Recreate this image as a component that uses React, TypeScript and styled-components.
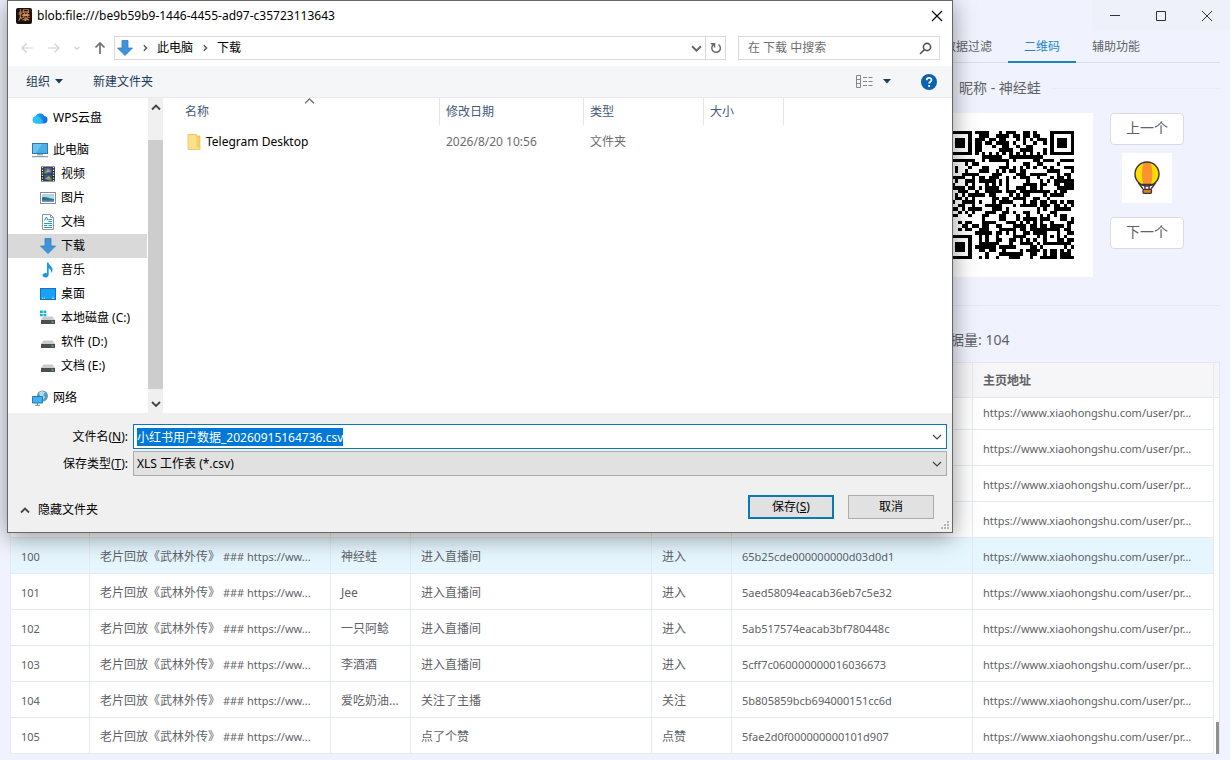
import React, { useEffect, useRef } from "react";
import styled, { createGlobalStyle, css } from "styled-components";

const GlobalStyle = createGlobalStyle`
  * { box-sizing: border-box; }
  body {
    margin: 0;
    background: #f0f3fe;
    font: 12px/16px "Noto Sans", "Noto Sans CJK SC", sans-serif;
    color: #606266;
  }
  button, input, select { font: inherit; color: inherit; margin: 0; }
  button { border: 0; padding: 0; background: none; cursor: pointer; }
  a { color: inherit; text-decoration: none; }
  svg { display: block; flex: none; }
`;

/* ---------- application window ---------- */

const Page = styled.div`
  position: relative;
  height: 100vh;
  min-height: 640px;
  display: flex;
  flex-direction: column;
  overflow: hidden;
  padding: 0 10px 6px;
`;

const TitleBar = styled.header`
  display: flex;
  justify-content: flex-end;
  height: 31px;
  margin-right: -10px;
`;

const WindowButton = styled.button`
  width: 46px;
  display: grid;
  place-items: center;
  background: #eff1fa;
  color: #333;
`;

const TopPanel = styled.section`
  display: grid;
  grid-template-columns: 1fr 292px;
  height: 275px;
  border-bottom: 1px solid #e6e9f2;
`;

const SidePanel = styled.div`
  grid-column: 2;
`;

const Tabs = styled.nav`
  display: flex;
  height: 32px;
  border-bottom: 1px solid #d8dde8;
`;

const Tab = styled.button<{ $active?: boolean }>`
  height: 32px;
  padding: 0 16px;
  ${(p) =>
    p.$active &&
    css`
      color: #1e88c8;
      border-bottom: 2px solid #1e86b8;
      padding-top: 2px;
    `}
`;

const Legend = styled.h2`
  display: flex;
  align-items: center;
  gap: 10px;
  margin: 15px 0 15px 31px;
  font-size: 14px;
  line-height: 20px;
  font-weight: 400;
  &::after {
    content: "";
    flex: 1;
    border-top: 1px solid #e9ecf6;
  }
`;

const QrRow = styled.div`
  display: flex;
  align-items: flex-start;
  gap: 17px;
  padding-left: 1px;
`;

const QrCard = styled.div`
  background: #fff;
  padding: 18px 19px;
`;

const Steps = styled.div`
  display: flex;
  flex-direction: column;
  align-items: center;
`;

const StepButton = styled.button`
  width: 74px;
  height: 32px;
  padding-bottom: 2px;
  border: 1px solid #d8dbe2;
  border-radius: 4px;
  background: #fff;
  font-size: 14px;
`;

const Balloon = styled.div`
  width: 50px;
  height: 50px;
  margin: 8px 0 14px;
  background: #fff;
  display: grid;
  place-items: center;
`;

const Count = styled.p`
  display: grid;
  grid-template-columns: 1fr 292px;
  margin: 24px 0 12px;
  font-size: 14px;
  line-height: 20px;
  span { grid-column: 2; padding-left: 8px; }
`;

const Grid = styled.section`
  flex: 1;
  min-height: 0;
  display: flex;
  flex-direction: column;
  border-top: 1px solid #e4e7ee;
  border-right: 1px solid #e4e7ee;
  background: #fff;
`;

const GridHead = styled.div`
  background: #f6f6f8;
  border-bottom: 1px solid #e4e7ee;
  padding-right: 5px;
`;

const GridBody = styled.div`
  position: relative;
  flex: 1;
  min-height: 0;
  display: flex;
  flex-direction: column;
  justify-content: flex-end;
  overflow: hidden;
  padding-right: 5px;
`;

const GridThumb = styled.span`
  position: absolute;
  right: 0;
  bottom: 0;
  width: 3px;
  height: 32px;
  background: #909090;
`;

const DataTable = styled.table`
  width: 100%;
  table-layout: fixed;
  border-collapse: separate;
  border-spacing: 0;
  th, td {
    height: 36px;
    padding: 2px 10px 0;
    text-align: left;
    white-space: nowrap;
    overflow: hidden;
    border-right: 1px solid #e6e9ee;
  }
  th { height: 34px; }
  td { border-bottom: 1px solid #e6e9ee; }
  th:first-child, td:first-child { border-left: 1px solid #e6e9ee; }
`;

const DataRow = styled.tr<{ $selected?: boolean }>`
  background: ${(p) => (p.$selected ? "#e6f6ff" : "#fff")};
`;

const Latin = styled.span`
  font-size: 11px;
`;

/* ---------- save dialog ---------- */

const Dialog = styled.div`
  position: absolute;
  left: 7px;
  top: 0;
  width: 946px;
  max-width: calc(100% - 14px);
  border: 1px solid #666;
  background: #fff;
  color: #000;
  box-shadow: 0 4px 22px rgba(0, 0, 0, 0.42);
`;

const DialogTitle = styled.div`
  display: flex;
  align-items: center;
  gap: 5px;
  height: 30px;
  padding: 0 9px 0 8px;
`;

const AppBadge = styled.span`
  width: 16px;
  height: 16px;
  border-radius: 2px;
  background: #1c100c;
  color: #e0a060;
  font-size: 12px;
  line-height: 16px;
  text-align: center;
`;

const TitleText = styled.h1`
  flex: 1;
  margin: 0;
  font-size: 12px;
  font-weight: 400;
`;

const NavRow = styled.div`
  display: flex;
  align-items: center;
  height: 35px;
  padding: 0 12px 1px 12px;
`;

const NavButtons = styled.div`
  display: flex;
  align-items: center;
  gap: 13px;
  width: 94px;
`;

const Address = styled.div`
  flex: 1;
  display: flex;
  align-items: center;
  height: 24px;
  margin-right: 12px;
  padding-left: 2px;
  border: 1px solid #d9d9d9;
  button { flex: none; }
`;

const Crumbs = styled.div`
  flex: 1;
  display: flex;
  align-items: center;
  gap: 8px;
`;

const RefreshButton = styled.button`
  width: 20px;
  height: 22px;
  margin-left: 3px;
  border-left: 1px solid #d9d9d9;
  display: grid;
  place-items: center;
`;

const Search = styled.label`
  display: flex;
  align-items: center;
  width: 202px;
  height: 24px;
  padding: 0 7px 0 9px;
  border: 1px solid #d9d9d9;
  input {
    flex: 1;
    min-width: 0;
    border: 0;
    outline: 0;
    padding: 0;
    background: none;
  }
  input::placeholder { color: #6d6d6d; opacity: 1; }
`;

const Toolbar = styled.div`
  display: flex;
  align-items: center;
  height: 32px;
  padding: 0 15px 0 18px;
  background: #f4f6f8;
  border-bottom: 1px solid #e8eaee;
  color: #1e3a5c;
`;

const ToolButton = styled.button`
  display: flex;
  align-items: center;
  gap: 5px;
  margin-right: 30px;
`;

const Spacer = styled.span`
  flex: 1;
`;

const Explorer = styled.div`
  display: flex;
  height: 315px;
`;

const Tree = styled.ul`
  width: 140px;
  margin: 0;
  padding: 8px 0 0;
  list-style: none;
`;

const TreeItem = styled.li<{ $level: number; $selected?: boolean; $gap?: boolean }>`
  display: flex;
  align-items: center;
  height: 24px;
  gap: 5px;
  padding-left: ${(p) => (p.$level ? 32 : 24)}px;
  margin-top: ${(p) => (p.$gap ? 8 : 0)}px;
  margin-right: 1px;
  background: ${(p) => (p.$selected ? "#d9d9d9" : "transparent")};
`;

const ScrollBar = styled.div`
  width: 15px;
  display: flex;
  flex-direction: column;
  background: #f0f0f0;
  button { display: grid; place-items: center; height: 18px; }
`;

const ScrollThumb = styled.span`
  flex: 1;
  margin: 24px 0 6px;
  background: #cdcdcd;
`;

const FileTable = styled.table`
  flex: 1;
  align-self: flex-start;
  table-layout: fixed;
  border-collapse: separate;
  border-spacing: 0;
  margin-left: 3px;
  width: 100%;
  color: #6d6d6d;
  th, td {
    padding: 0 6px;
    text-align: left;
    font-weight: 400;
    white-space: nowrap;
  }
  th {
    height: 27px;
    color: #44587a;
    border-right: 1px solid #e5e5e5;
  }
  th:last-child { border-right: 0; }
  th:first-child { padding-left: 19px; }
  td { height: 28px; padding-top: 5px; }
  td:first-child { padding-left: 21px; color: #000; }
`;

const NameHead = styled.div`
  position: relative;
  svg { position: absolute; top: -9px; left: 119px; }
`;

const FileName = styled.span`
  display: flex;
  align-items: center;
  gap: 5px;
`;

const Footer = styled.form`
  padding: 11px 5px 13px 6px;
  background: #f0f0f0;
`;

const Field = styled.div`
  display: grid;
  grid-template-columns: 114px 1fr;
  align-items: center;
  gap: 5px;
  margin-bottom: 2px;
  label { text-align: right; }
`;

const Combo = styled.div<{ $active?: boolean }>`
  display: flex;
  align-items: center;
  height: 25px;
  padding: 0 4px 0 3px;
  border: 1px solid ${(p) => (p.$active ? "#0a78b8" : "#acacac")};
  background: ${(p) => (p.$active ? "#fff" : "#e1e1e1")};
  input, select {
    flex: 1;
    min-width: 0;
    height: 18px;
    border: 0;
    outline: 0;
    padding: 0;
    background: none;
    appearance: none;
  }
  ::selection { background: #0078d7; color: #fff; }
  svg { pointer-events: none; }
`;

const Actions = styled.div`
  display: flex;
  align-items: center;
  gap: 14px;
  padding: 17px 13px 0 6px;
`;

const HideButton = styled.button`
  display: flex;
  align-items: center;
  gap: 8px;
  margin: 5px auto 0 0;
`;

const ActionButton = styled.button<{ $primary?: boolean }>`
  width: 86px;
  height: 24px;
  background: #e1e1e1;
  border: ${(p) => (p.$primary ? "2px solid #0a78b8" : "1px solid #acacac")};
`;

const Grip = styled.span`
  position: absolute;
  right: 2px;
  bottom: 2px;
`;

/* ---------- icons ---------- */

const Chevron = ({ dir = "down", size = 10, color = "#444", w = 1.4 }: { dir?: "up" | "down" | "right"; size?: number; color?: string; w?: number }) => {
  const d = { up: "M1 7.5 5 3.500 9 7.500", down: "M1 3 5 7 9 3", right: "M3.500 1.500 7 5 3.500 8.500" }[dir];
  return (
    <svg width={size} height={size} viewBox="0 0 10 10" fill="none" stroke={color} strokeWidth={w}>
      <path d={d} />
    </svg>
  );
};

const Arrow = ({ dir, color }: { dir: "left" | "right" | "up"; color: string }) => {
  const d = {
    left: "M13 7H2M6.500 2.500 2 7l4.500 4.500",
    right: "M1 7h11M7.500 2.500 12 7l-4.500 4.500",
    up: "M7 13V2M2.500 6.500 7 2l4.500 4.500",
  }[dir];
  return (
    <svg width="14" height="14" viewBox="0 0 14 14" fill="none" stroke={color} strokeWidth={dir === "up" ? 1.7 : 1.2}>
      <path d={d} />
    </svg>
  );
};

const Triangle = () => (
  <svg width="8" height="5" viewBox="0 0 8 5"><path d="M0 0h8L4 4.500z" fill="#1e3a5c" /></svg>
);

const DownloadIcon = () => (
  <svg width="16" height="16" viewBox="0 0 16 16">
    <path d="M5 .5h6v7.500h4.500L8 15.500.500 8H5z" fill="#3d93dc" stroke="#2f7fc4" strokeWidth=".8" />
  </svg>
);

const CloudIcon = () => (
  <svg width="16" height="16" viewBox="0 0 16 16">
    <defs>
      <linearGradient id="cloud" x1="0" x2="1"><stop offset="0" stopColor="#25c4f5" /><stop offset="1" stopColor="#1462e0" /></linearGradient>
    </defs>
    <path d="M4 13.500a3.700 3.700 0 0 1-.5-7.300A5 5 0 0 1 12.500 6 3.800 3.800 0 0 1 12 13.500z" fill="url(#cloud)" />
    <path d="M1.500 7.500c3-2.500 6-1 8 1.500 1.500 2 1.500 3.500 0 4.500H4A3.700 3.700 0 0 1 1.500 7.500z" fill="#2cc9f2" opacity=".75" />
  </svg>
);

const PcIcon = () => (
  <svg width="16" height="16" viewBox="0 0 16 16">
    <rect x=".5" y="1.500" width="15" height="10" fill="#47aee8" stroke="#2d78a8" />
    <path d="M1 2h9L4 11H1z" fill="#7dcaf4" opacity=".7" />
    <path d="M0 14.700h16M5 12.800h6" stroke="#6a8ea4" />
  </svg>
);

const VideoIcon = () => (
  <svg width="16" height="16" viewBox="0 0 16 16">
    <rect x="1" y=".5" width="14" height="15" fill="#2c2c30" />
    <path d="M2.500 1v14M13.500 1v14" stroke="#e6e6e6" strokeWidth="1.300" strokeDasharray="1.300 1.300" />
    <rect x="4.300" y="1.500" width="7.400" height="6" fill="#4668a8" />
    <rect x="4.300" y="8.500" width="7.400" height="6" fill="#37599b" />
    <path d="M5 6.500 8 3l3 2.500zM5 13l4-3 2 3.500z" fill="#d8a23c" />
    <path d="M4.300 5.500h3v2h-3zM8.500 12.500h3v2h-3z" fill="#56a04c" />
  </svg>
);

const ImageIcon = () => (
  <svg width="16" height="16" viewBox="0 0 16 16">
    <rect x=".5" y="2.500" width="15" height="11" fill="#fff" stroke="#8c8c8c" />
    <rect x="2" y="4" width="12" height="8" fill="#a9d6f0" />
    <path d="M2 7.500c3-1.500 6 1 12 1.500v3H2z" fill="#3a6b80" />
    <path d="M2 10.500h12V12H2z" fill="#5b9bc4" />
  </svg>
);

const DocIcon = () => (
  <svg width="16" height="16" viewBox="0 0 16 16">
    <path d="M2.500.5h8l3 3v12h-11z" fill="#fff" stroke="#8a9a9f" />
    <path d="M10.500.5v3h3" fill="none" stroke="#8a9a9f" />
    <path d="M4.500 6.500 6.500 3l1.500 3.500M8.500 5.500H12M8.500 7.500H12M4 9.500h8M4 11.500h3M8.500 11.500H12M4 13.500h8" fill="none" stroke="#2b9bb5" />
  </svg>
);

const MusicIcon = () => (
  <svg width="16" height="16" viewBox="0 0 16 16">
    <path d="M7 .5h1.500c.5 3 4.500 4 4 7.500-.2 1.500-1 2.500-1.500 3 .5-2.500-.5-4-2.300-4.800V12.500c0 1.800-1.500 3-3.200 3S2.500 14.500 2.500 13.300 4 11 5.500 11c.6 0 1 .1 1.500.3z" fill="#1b98e0" />
  </svg>
);

const DesktopIcon = () => (
  <svg width="16" height="16" viewBox="0 0 16 16">
    <rect x=".5" y="2.500" width="15" height="11" fill="#1aa2f4" stroke="#1473bd" />
    <path d="M2 12.200h1M4 12.200h1M12 12.200h2" stroke="#fff" strokeWidth=".8" />
  </svg>
);

const DiskIcon = ({ system }: { system?: boolean }) => (
  <svg width="16" height="16" viewBox="0 0 16 16">
    <path d="M3.500 6.500h9L15 10H1z" fill="#c9cccd" />
    <rect x="1" y="10" width="14" height="4" fill="#4a4f50" />
    <path d="M11.500 12h2" stroke="#7fe07f" />
    {system && <path d="M0 .5h2.800v2.500H0zM3.500.5h2.800v2.500H3.500zM0 3.700h2.800v2.500H0zM3.500 3.700h2.800v2.500H3.500z" fill="#1fb0d4" />}
  </svg>
);

const NetworkIcon = () => (
  <svg width="16" height="16" viewBox="0 0 16 16">
    <circle cx="10.500" cy="6" r="5.500" fill="#5a9cc0" />
    <path d="M7 3c2-2.500 4-2 6-.5L11 5l2 2-2 3-3-4z" fill="#b8dbe8" />
    <path d="M.5 6.500h10v6.500H.5z" fill="#3fb0f0" stroke="#2a76ae" />
    <path d="M5.500 13v2M3 15.300h5" stroke="#5c89a8" />
  </svg>
);

const FolderIcon = () => (
  <svg width="14" height="16" viewBox="0 0 14 16">
    <path d="M1 .5h8.500v1.500H13v13.500H1z" fill="#f6d067" />
    <path d="M1 .5h8.500v13H13v2H1z" fill="#fde08a" />
    <path d="M1 15.500V.5h8.500V2H13v13.500z" fill="none" stroke="#e5bd52" strokeWidth=".7" />
  </svg>
);

const BalloonIcon = () => (
  <svg width="26" height="34" viewBox="0 0 26 34">
    <circle cx="13" cy="13" r="12" fill="#ffdc00" />
    <path d="M9.500 1.500h7c2.500 7 2.500 16 0 23h-7c-2-7-2-16 0-23z" fill="#fb9230" />
    <path d="M4.500 22 9 28M21.500 22 17 28M11 25v3M15 25v3M6 23.500h14" fill="none" stroke="#3c3436" strokeWidth="1.400" />
    <circle cx="13" cy="13" r="12" fill="none" stroke="#3c3436" strokeWidth="1.400" />
    <rect x="9" y="28.300" width="8.500" height="4" rx="1" fill="#e07b28" stroke="#3c3436" strokeWidth="1.300" />
  </svg>
);

const SIZE = 37;

const ring = (dx: number, dy: number, radius: number) => {
  const d = Math.max(Math.abs(dx), Math.abs(dy));
  if (d > radius) return null;
  return radius === 4 ? d === 3 || d <= 1 : d !== 1;
};

const isDark = (x: number, y: number) => {
  const fixed =
    ring(x - 3, y - 3, 4) ?? ring(x - SIZE + 4, y - 3, 4) ?? ring(x - 3, y - SIZE + 4, 4) ?? ring(x - 30, y - 30, 2);
  if (fixed !== null) return fixed;
  if (x === 6 || y === 6) return (x + y) % 2 === 0;
  let h = Math.imul(x + 11, 374761393) ^ Math.imul(y + 5, 668265263);
  h = Math.imul(h ^ (h >>> 13), 1274126177);
  return ((h ^ (h >>> 16)) & 255) < 128;
};

const qrPath = Array.from({ length: SIZE * SIZE }, (_, i) => [i % SIZE, Math.floor(i / SIZE)])
  .filter(([x, y]) => isDark(x, y))
  .map(([x, y]) => `M${x} ${y}h1v1h-1z`)
  .join("");

const QrCode = () => (
  <svg width="126" height="128" viewBox="0 0 37 37" preserveAspectRatio="none" shapeRendering="crispEdges" role="img" aria-label="二维码">
    <path d={qrPath} />
  </svg>
);

/* ---------- data ---------- */

const headers = ["序号", "直播间", "昵称", "内容", "类型", "用户ID", "主页地址"];
const room = "老片回放《武林外传》";
const roomLink = " ### https://ww...";
const url = "https://www.xiaohongshu.com/user/pr...";

type Entry = { no: number; nick?: string; text?: string; kind?: string; id?: string };
const rows: Entry[] = [
  { no: 96 },
  { no: 97 },
  { no: 98 },
  { no: 99 },
  { no: 100, nick: "神经蛙", text: "进入直播间", kind: "进入", id: "65b25cde000000000d03d0d1" },
  { no: 101, nick: "Jee", text: "进入直播间", kind: "进入", id: "5aed58094eacab36eb7c5e32" },
  { no: 102, nick: "一只阿鲶", text: "进入直播间", kind: "进入", id: "5ab517574eacab3bf780448c" },
  { no: 103, nick: "李酒酒", text: "进入直播间", kind: "进入", id: "5cff7c060000000016036673" },
  { no: 104, nick: "爱吃奶油...", text: "关注了主播", kind: "关注", id: "5b805859bcb694000151cc6d" },
  { no: 105, text: "点了个赞", kind: "点赞", id: "5fae2d0f000000000101d907" },
];

const tree: { label: string; icon: React.ReactNode; level: number; gap?: boolean; selected?: boolean }[] = [
  { label: "WPS云盘", icon: <CloudIcon />, level: 0 },
  { label: "此电脑", icon: <PcIcon />, level: 0, gap: true },
  { label: "视频", icon: <VideoIcon />, level: 1 },
  { label: "图片", icon: <ImageIcon />, level: 1 },
  { label: "文档", icon: <DocIcon />, level: 1 },
  { label: "下载", icon: <DownloadIcon />, level: 1, selected: true },
  { label: "音乐", icon: <MusicIcon />, level: 1 },
  { label: "桌面", icon: <DesktopIcon />, level: 1 },
  { label: "本地磁盘 (C:)", icon: <DiskIcon system />, level: 1 },
  { label: "软件 (D:)", icon: <DiskIcon />, level: 1 },
  { label: "文档 (E:)", icon: <DiskIcon />, level: 1 },
  { label: "网络", icon: <NetworkIcon />, level: 0, gap: true },
];

const Columns = () => (
  <colgroup>
    <col style={{ width: 80 }} />
    <col />
    <col style={{ width: 80 }} />
    <col />
    <col style={{ width: 80 }} />
    <col />
    <col />
  </colgroup>
);

function SaveDialog() {
  const name = useRef<HTMLInputElement>(null);
  useEffect(() => {
    name.current?.focus();
    name.current?.select();
  }, []);

  return (
    <Dialog role="dialog" aria-labelledby="dialog-title">
      <DialogTitle>
        <AppBadge>爆</AppBadge>
        <TitleText id="dialog-title">blob:file:///be9b59b9-1446-4455-ad97-c35723113643</TitleText>
        <button aria-label="关闭">
          <svg width="12" height="12" viewBox="0 0 12 12" stroke="#000" strokeWidth="1.100"><path d="m1 1 10 10M11 1 1 11" /></svg>
        </button>
      </DialogTitle>

      <NavRow>
        <NavButtons>
          <button aria-label="后退"><Arrow dir="left" color="#d0d0d0" /></button>
          <button aria-label="前进"><Arrow dir="right" color="#d0d0d0" /></button>
          <button aria-label="历史"><Chevron size={6} color="#ccc" w={2} /></button>
          <button aria-label="向上"><Arrow dir="up" color="#707070" /></button>
        </NavButtons>
        <Address>
          <Crumbs>
            <DownloadIcon />
            <Chevron dir="right" size={8} color="#555" w={1.8} />
            <button>此电脑</button>
            <Chevron dir="right" size={8} color="#555" w={1.8} />
            <button>下载</button>
          </Crumbs>
          <button aria-label="展开"><Chevron size={11} color="#666" w={1.8} /></button>
          <RefreshButton aria-label="刷新">
            <svg width="12" height="12" viewBox="0 0 12 12" fill="none" stroke="#666" strokeWidth="1.500">
              <path d="M8.500 2.500A4.300 4.300 0 1 1 3.800 2.400M.8 1.800H4.500V5.500" />
            </svg>
          </RefreshButton>
        </Address>
        <Search>
          <input aria-label="搜索" placeholder="在 下载 中搜索" />
          <svg width="13" height="13" viewBox="0 0 13 13" fill="none" stroke="#555" strokeWidth="1.600">
            <circle cx="8" cy="5" r="3.600" /><path d="M5.500 7.500 1 12" />
          </svg>
        </Search>
      </NavRow>

      <Toolbar>
        <ToolButton>组织 <Triangle /></ToolButton>
        <ToolButton>新建文件夹</ToolButton>
        <Spacer />
        <ToolButton aria-label="视图">
          <svg width="17" height="13" viewBox="0 0 17 13" fill="none" stroke="#888">
            <path d="M.5.5h4v12h-4zM.5 4.500h4M.5 8.500h4" />
            <path d="M7 2.500h4M12.500 2.500h4M7 6.500h4M12.500 6.500h4M7 10.500h4M12.500 10.500h4" />
          </svg>
          <Spacer />
          <Triangle />
        </ToolButton>
        <button aria-label="帮助">
          <svg width="16" height="16" viewBox="0 0 16 16">
            <circle cx="8" cy="8" r="8" fill="#0a62b0" />
            <path d="M5.700 6.200C5.700 3.200 10.500 3.200 10.500 6c0 1.700-2.400 1.800-2.400 3.600" fill="none" stroke="#fff" strokeWidth="1.700" />
            <circle cx="8.100" cy="12" r="1.100" fill="#fff" />
          </svg>
        </button>
      </Toolbar>

      <Explorer>
        <Tree>
          {tree.map((t) => (
            <TreeItem key={t.label} $level={t.level} $gap={t.gap} $selected={t.selected}>
              {t.icon}
              <span>{t.label}</span>
            </TreeItem>
          ))}
        </Tree>
        <ScrollBar>
          <button aria-label="向上滚动"><Chevron dir="up" w={1.8} /></button>
          <ScrollThumb />
          <button aria-label="向下滚动"><Chevron w={1.8} /></button>
        </ScrollBar>
        <FileTable>
          <colgroup>
            <col style={{ width: 274 }} />
            <col style={{ width: 144 }} />
            <col style={{ width: 120 }} />
            <col style={{ width: 80 }} />
            <col />
          </colgroup>
          <thead>
            <tr>
              <th><NameHead>名称<Chevron dir="up" size={11} color="#666" w={1.1} /></NameHead></th>
              <th>修改日期</th>
              <th>类型</th>
              <th>大小</th>
              <th />
            </tr>
          </thead>
          <tbody>
            <tr>
              <td><FileName><FolderIcon />Telegram Desktop</FileName></td>
              <td>2026/8/20 10:56</td>
              <td>文件夹</td>
              <td />
              <td />
            </tr>
          </tbody>
        </FileTable>
      </Explorer>

      <Footer onSubmit={(e) => e.preventDefault()}>
        <Field>
          <label htmlFor="file-name">文件名(<u>N</u>):</label>
          <Combo $active>
            <input id="file-name" ref={name} defaultValue="小红书用户数据_20260915164736.csv" />
            <Chevron w={1.2} />
          </Combo>
        </Field>
        <Field>
          <label htmlFor="file-type">保存类型(<u>T</u>):</label>
          <Combo>
            <select id="file-type"><option>XLS 工作表 (*.csv)</option></select>
            <Chevron w={1.2} />
          </Combo>
        </Field>
        <Actions>
          <HideButton type="button"><Chevron dir="up" w={1.8} />隐藏文件夹</HideButton>
          <ActionButton $primary>保存(<u>S</u>)</ActionButton>
          <ActionButton type="button">取消</ActionButton>
        </Actions>
      </Footer>
      <Grip>
        <svg width="9" height="9" viewBox="0 0 9 9" fill="#b5b5b5">
          <path d="M6 0h2v2H6zM3 3h2v2H3zM6 3h2v2H6zM0 6h2v2H0zM3 6h2v2H3zM6 6h2v2H6z" />
        </svg>
      </Grip>
    </Dialog>
  );
}

export default function App() {
  return (
    <Page>
      <GlobalStyle />
      <TitleBar>
        <WindowButton aria-label="最小化"><svg width="10" height="10" stroke="#333"><path d="M0 4.500h10" /></svg></WindowButton>
        <WindowButton aria-label="最大化"><svg width="10" height="10" fill="none" stroke="#333"><path d="M.5.5h9v9h-9z" /></svg></WindowButton>
        <WindowButton aria-label="关闭窗口"><svg width="10" height="10" stroke="#333"><path d="m0 0 10 10M10 0 0 10" /></svg></WindowButton>
      </TitleBar>

      <TopPanel>
        <SidePanel>
          <Tabs>
            <Tab>数据过滤</Tab>
            <Tab $active>二维码</Tab>
            <Tab>辅助功能</Tab>
          </Tabs>
          <Legend>昵称 - 神经蛙</Legend>
          <QrRow>
            <QrCard><QrCode /></QrCard>
            <Steps>
              <StepButton>上一个</StepButton>
              <Balloon><BalloonIcon /></Balloon>
              <StepButton>下一个</StepButton>
            </Steps>
          </QrRow>
        </SidePanel>
      </TopPanel>

      <Count><span>数据量: 104</span></Count>

      <Grid>
        <GridHead>
          <DataTable>
            <Columns />
            <thead>
              <tr>{headers.map((h) => <th key={h}>{h}</th>)}</tr>
            </thead>
          </DataTable>
        </GridHead>
        <GridBody>
          <DataTable>
            <Columns />
            <tbody>
              {rows.map((r) => (
                <DataRow key={r.no} $selected={r.no === 100}>
                  <td>{r.id && <Latin>{r.no}</Latin>}</td>
                  <td>{r.id && <>{room}<Latin>{roomLink}</Latin></>}</td>
                  <td>{r.nick}</td>
                  <td>{r.text}</td>
                  <td>{r.kind}</td>
                  <td><Latin>{r.id}</Latin></td>
                  <td><a href="https://www.xiaohongshu.com/"><Latin>{url}</Latin></a></td>
                </DataRow>
              ))}
            </tbody>
          </DataTable>
          <GridThumb />
        </GridBody>
      </Grid>

      <SaveDialog />
    </Page>
  );
}
